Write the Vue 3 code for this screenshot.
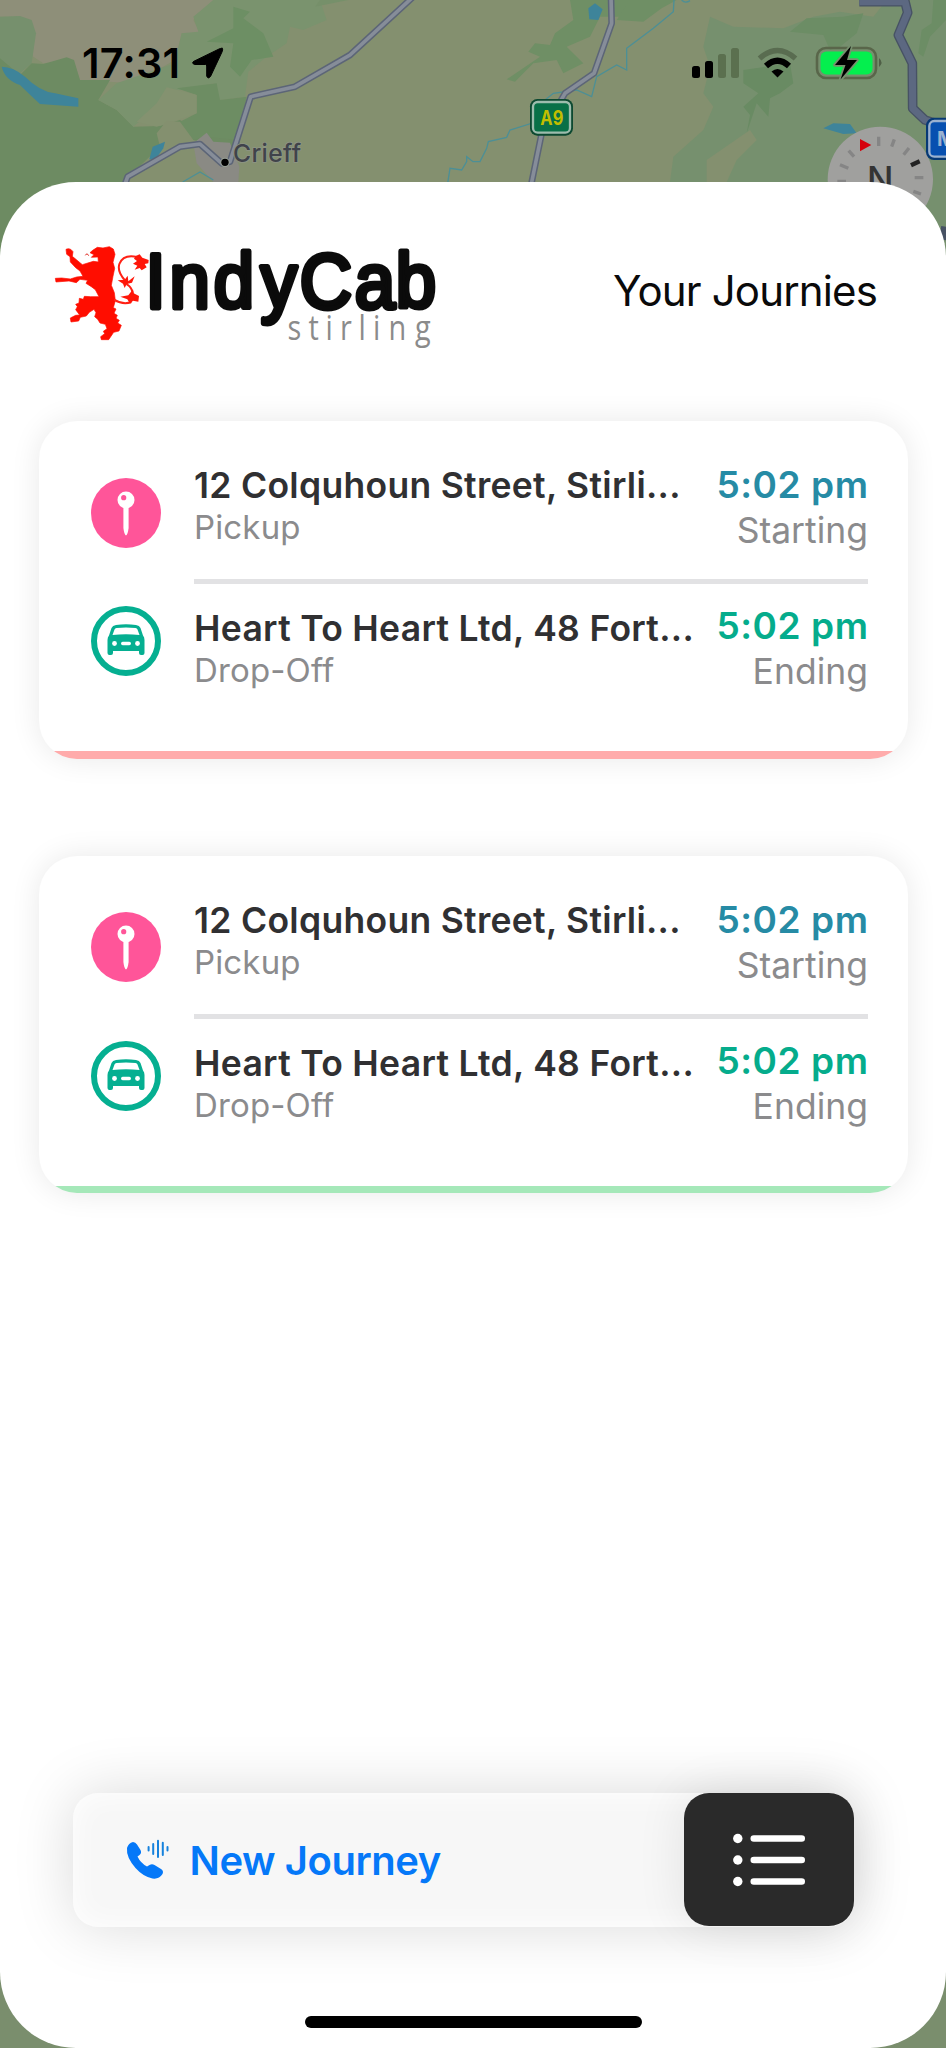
<script setup>
import { ref } from "vue";

const journeys = ref([
  {
    id: 1,
    status: "cancelled",
    stops: [
      { type: "start", address: "12 Colquhoun Street, Stirli...", label: "Pickup", time: "5:02 pm", note: "Starting" },
      { type: "end", address: "Heart To Heart Ltd, 48 Fort...", label: "Drop-Off", time: "5:02 pm", note: "Ending" },
    ],
  },
  {
    id: 2,
    status: "complete",
    stops: [
      { type: "start", address: "12 Colquhoun Street, Stirli...", label: "Pickup", time: "5:02 pm", note: "Starting" },
      { type: "end", address: "Heart To Heart Ltd, 48 Fort...", label: "Drop-Off", time: "5:02 pm", note: "Ending" },
    ],
  },
]);
</script>

<template>
  <div class="screen">
    <svg class="map" width="946" height="260" viewBox="0 0 2838 780">
      <rect width="2838" height="780" fill="#84906f" />
      <path d="M0 0H640L580 60L600 100L545 100L525 180L400 250L240 240L220 180L130 190L100 170L60 50L0 50Z" fill="#8e8f79" />
      <path d="M0 50L60 48L95 60L108 100L95 190L60 220L0 190Z" fill="#76906d" />
      <path d="M0 175L60 225L95 190L130 192L200 172L222 180L240 240L330 240L295 300L350 330L400 380L480 378L540 360L600 400L720 420L700 546L370 546L200 780H0Z" fill="#6d8b62" />
      <path d="M640 0H960L980 60L910 90L870 80L860 130L800 170L745 215L735 290L660 300L640 250L560 270L530 270L400 380L350 330L295 300L350 250L525 190L545 100L595 95L580 50Z" fill="#7a936e" />
      <path d="M700 20L750 35L730 55L790 100L820 170L755 180L720 230L690 200L700 130L620 125L700 85Z" fill="#6d8f64" />
      <path d="M530 265L650 250L660 300L740 290L715 420L620 410L575 420L540 365L590 340L590 285Z" fill="#6d8d63" />
      <path d="M410 365L470 310L500 262L590 285L590 340L540 358L470 380Z" fill="#849270" />
      <path d="M470 400L500 362L540 365L580 420L610 430L600 480L640 546H370L480 440Z" fill="#84906f" />
      <path d="M945 20L960 0H1045Z" fill="#76906a" />
      <path d="M580 430L620 398L640 425L690 428L718 500L715 546H640L590 490Z" fill="#8a8a84" />
      <path d="M5 200Q40 200 75 230Q120 275 165 280L235 295L235 320L120 312Q85 280 60 255Q15 240 5 200Z" fill="#3e849a" />
      <path d="M448 478L458 440L495 425L490 445L465 480Z" fill="#3e849a" />

      <path d="M1710 0H1900L1870 50L1800 50L1770 110L1700 140L1750 190L1690 220L1670 180L1600 190L1545 245L1520 238L1620 170L1585 155L1605 130L1650 135L1665 100L1720 60Z" fill="#6f8f65" />
      <path d="M1890 0H2030L1985 25L1930 65L1850 60Z" fill="#6f8f65" />
      <path d="M2130 50L2200 80L2350 85L2440 50L2520 35L2620 50L2660 0H2838V780H2500V546H2010L2020 470L2110 390L2140 320L2110 280L2130 200L2110 140Z" fill="#76906e" />
      <path d="M2370 95L2420 55L2530 50L2590 40L2570 100L2520 140L2490 150L2470 105Z" fill="#6c8d65" />
      <path d="M2230 210L2370 190L2380 250L2340 280L2310 295L2305 350L2270 310L2240 400L2250 345L2230 320L2275 280L2230 250Z" fill="#698b63" />
      <path d="M2120 480L2250 390L2270 420L2210 480L2180 546H2120Z" fill="#84906f" />
      <path d="M2800 0H2838V60L2790 110L2770 170L2755 160L2765 90L2795 70Z" fill="#6c8d65" />
      <path d="M1765 25L1785 10L1808 28L1795 60L1768 58Z" fill="#3e849a" />
      <path d="M2470 385L2500 370L2550 372L2570 400L2530 402Z" fill="#3e849a" />

      <g fill="none" stroke="#4c8f96" stroke-width="4">
        <path d="M2022 0L2020 35L1960 85L1880 145L1880 210L1850 195L1790 230L1775 290L1730 270L1660 280L1610 320L1595 370L1530 390L1520 412L1465 425L1460 445L1440 485L1419 485L1400 470L1400 485L1385 510L1350 505L1343 550" />
        <path d="M548 546L600 516L640 540" />
        <path d="M2045 0Q2055 12 2070 2" />
      </g>

      <g fill="none" stroke-linejoin="round">
        <g stroke="#5c6577" stroke-width="20">
          <path d="M1240 -10L1050 165L885 260L752 290L690 485L665 490L600 432L540 440L383 530L375 552" />
          <path d="M1833 -10L1835 70L1782 220L1695 280L1625 400L1594 552" />
        </g>
        <g stroke="#868d99" stroke-width="11">
          <path d="M1240 -10L1050 165L885 260L752 290L690 485L665 490L600 432L540 440L383 530L375 552" />
          <path d="M1833 -10L1835 70L1782 220L1695 280L1625 400L1594 552" />
        </g>
        <path d="M2578 5H2715L2723 38L2695 105L2737 190L2738 325L2775 360L2838 380M2838 680L2832 720" stroke="#475264" stroke-width="29" />
        <path d="M2578 5H2715L2723 38L2695 105L2737 190L2738 325L2775 360L2838 380" stroke="#5c6881" stroke-width="21" />
      </g>
      <circle cx="675" cy="487" r="14" fill="#98a095" />
      <circle cx="675" cy="487" r="11" fill="#000" />
      <text class="town" x="699" y="486" textLength="204">Crieff</text>

      <rect x="1590" y="297" width="129" height="110" rx="22" fill="#0d4931" />
      <rect x="1599" y="306" width="111" height="92" rx="14" fill="#087047" stroke="#9dbcad" stroke-width="7" />
      <text class="road" x="1621" y="374" textLength="69" lengthAdjust="spacingAndGlyphs" fill="#c1bd00">A9</text>

      <circle cx="2641" cy="538" r="158" fill="#a0a09e" />
      <g fill="none" stroke="#858585" stroke-width="10">
        <path d="M2636 410V438M2683 418L2675 440M2727 444L2711 464M2546 452L2562 470M2520 494L2545 505M2512 544H2538M2744 533H2770M2740 574L2763 582" />
      </g>
      <path d="M2733 496L2759 484" stroke="#222" stroke-width="13" />
      <path d="M2580 417L2614 435L2580 454Z" fill="#d5000b" />
      <text class="north" x="2601" y="575">N</text>
      <rect x="2778" y="353" width="140" height="127" rx="24" fill="#073975" />
      <rect x="2788" y="363" width="140" height="107" rx="15" fill="#0750b0" stroke="#9bb2d0" stroke-width="7" />
      <text class="road" x="2811" y="439" fill="#9bb2d0">M</text>
    </svg>

    <header class="status">
      <span class="clock">17:31</span>
      <svg class="arrow" width="33" height="33" viewBox="0 0 33 33">
        <path d="M31.5 1.5Q32 0.5 28 2L3 14.200Q0 16 3.500 17.500L14.500 17.500Q15.700 17.500 15.700 19V29Q17 32.500 19.500 29.500L31 5Q32 2.500 31.500 1.500Z" stroke="#000" stroke-linejoin="round" />
      </svg>
      <svg class="signals" width="194" height="36" viewBox="690 45 194 36">
        <rect x="692" y="66" width="8" height="12" rx="2.500" />
        <rect x="705" y="61" width="8" height="17" rx="2.500" />
        <rect x="718" y="54" width="8" height="24" rx="2.500" fill="#5b704f" />
        <rect x="731" y="48" width="8" height="30" rx="2.500" fill="#5b704f" />
        <path d="M759.500 58.500Q777.500 42.500 795.500 58.500" fill="none" stroke="#596c50" stroke-width="5.500" />
        <path d="M766 66Q777.500 55.500 789 66" fill="none" stroke="#000" stroke-width="6" />
        <path d="M777.500 77.500L771.500 71.500Q777.500 66.500 783.500 71.500Z" />
        <rect x="817" y="48" width="59" height="30" rx="9" fill="none" stroke="#59664a" stroke-width="2.600" />
        <path d="M879 58Q884 62.500 879 67Z" fill="#4f5f46" />
        <rect x="820.500" y="51.500" width="52" height="23" rx="6" fill="#04ef4e" />
        <path d="M851 46L835 65H845.500L840.500 79.500L857 60H847Z" stroke="#76906e" stroke-width="3.500" paint-order="stroke" stroke-linejoin="round" />
      </svg>
    </header>

    <main class="sheet">
      <div class="head">
        <svg class="logo" width="400" height="120" viewBox="0 0 400 120">
          <g transform="scale(0.33333)">
            <path d="M108 88Q120 82 129 95L127 109L157 134L190 124L205 126L204 111L184 112L192 104L180 98L188 91L202 82L219 84L238 80L250 87L255 103L249 127L254 145L249 169L244 196L253 218L256 242L250 263L258 267L252 280L262 286L258 295L268 301L263 309L274 316L267 333L251 337L236 359H214L212 350L224 341L220 334L231 326L226 313L210 309L203 298L194 290L198 278L192 268L178 277L169 288L151 292L146 303L123 306L121 294L137 286L149 285L137 269L142 260L137 253L147 249L148 235L160 238L163 229L182 230L207 230L196 209L184 200L168 190L173 181L150 178L139 188L117 183L78 186L76 175L95 174L121 177L140 171L159 169L150 153L137 143L121 126L120 110L110 103Z" fill="#ff0d00" stroke="#ff0d00" stroke-width="2" stroke-linejoin="round" />
            <path d="M166 106Q171 97 176 107" fill="none" stroke="#de2018" stroke-width="3" />
            <path d="M252 239Q280 256 304 246M309 225Q307 203 292 194L285 181Q261 155 268 132Q280 102 321 111" fill="none" stroke="#ff2115" stroke-width="6" />
            <path d="M312 116L317 108L329 103L337 113L356 120L355 130L344 132L350 142L335 151L329 144L314 149L322 137L309 131L321 123Z" fill="#ff1609" />
            <path d="M263 181L284 179L293 167L295 184L314 169L306 188L290 192L284 204L279 191ZM271 230L295 226L309 208L311 220L327 228L325 245L309 242L300 251L292 238Z" fill="#ff1609" />
          </g>
          <text class="brand" transform="scale(0.93 1)" x="124.300 150.100 197.600 248 290 349.200 393.400" y="88.200">IndyCab</text>
          <text class="city" transform="scale(0.85 1)" x="303 327.600 347.600 364.700 386.500 403.500 421.800 453" y="120">stirling</text>
        </svg>
        <h1>Your Journies</h1>
      </div>

      <section v-for="journey in journeys" :key="journey.id" class="card" :class="journey.status">
        <div class="icons">
          <svg width="70" height="70" viewBox="0 0 70 70">
            <circle cx="35" cy="35" r="35" fill="#ff5599" />
            <path d="M32.400 27H37.600V50Q36.700 57 35 57.500Q33.300 57 32.400 50Z" fill="#fff" />
            <circle cx="35" cy="22" r="8.500" fill="#fff" />
            <circle cx="32.700" cy="19.700" r="2.600" fill="#ff5599" />
          </svg>
          <svg width="70" height="70" viewBox="0 0 70 70">
            <circle cx="35" cy="35" r="32" fill="none" stroke="#05af91" stroke-width="6" />
            <path fill-rule="evenodd" fill="#05af91" d="M25 19Q35 17.500 45 19Q48.500 19.500 49.500 22L52 29.500Q53.500 31 53.500 34V47Q53.500 49 51.500 49H50Q48 49 48 47V45H22V47Q22 49 20 49H18.500Q16.500 49 16.500 47V34Q16.500 31 18 29.500L20.500 22Q21.500 19.500 25 19ZM25.500 22Q35 21 44.500 22Q46 22.200 46.500 23.500L48.500 29Q35 27.500 21.500 29L23.500 23.500Q24 22.200 25.500 22Z" />
            <circle cx="23.500" cy="37.500" r="2.400" fill="#fff" />
            <circle cx="46.500" cy="37.500" r="2.400" fill="#fff" />
            <rect x="30" y="35.800" width="10" height="3.400" rx="1.700" fill="#fff" />
          </svg>
        </div>
        <div class="stops">
          <div v-for="stop in journey.stops" :key="stop.type" class="stop" :class="stop.type">
            <div class="place">
              <div class="address">{{ stop.address }}</div>
              <div class="label">{{ stop.label }}</div>
            </div>
            <div class="when">
              <div class="time">{{ stop.time }}</div>
              <div class="note">{{ stop.note }}</div>
            </div>
          </div>
        </div>
      </section>

      <nav class="bar">
        <button class="new">
          <svg width="45" height="42" viewBox="0 0 45 42">
            <path d="M2 9Q3.500 4 8 3Q10.500 3 12 5.500L15.500 11Q17 14 14.500 16L12.500 17.500Q15.500 24 22 27.500L24.500 26Q27 24.500 29.500 26L36 30Q39 32 37.500 35Q34 40.500 27.500 39.500Q18 37.500 10.500 29Q1 18 2 9Z" fill="#0578f8" />
            <path d="M23.600 8V11.500M28.200 5V15M33 1.800V18M37.800 3.800V16M42.500 8V11.500" stroke="#1682dd" stroke-width="2" stroke-linecap="round" />
          </svg>
          <span>New Journey</span>
        </button>
        <button class="list">
          <svg width="72" height="54" viewBox="0 0 72 54">
            <g fill="#fff">
              <circle cx="4.800" cy="5.500" r="4.700" />
              <circle cx="4.800" cy="27" r="4.700" />
              <circle cx="4.800" cy="48.500" r="4.700" />
              <rect x="17.500" y="2.200" width="54.500" height="6.600" rx="3.300" />
              <rect x="17.500" y="23.700" width="54.500" height="6.600" rx="3.300" />
              <rect x="17.500" y="45.200" width="54.500" height="6.600" rx="3.300" />
            </g>
          </svg>
        </button>
      </nav>
      <div class="home"></div>
    </main>
  </div>
</template>

<style>
body {
  margin: 0;
}
</style>

<style scoped>
.screen {
  position: relative;
  display: flex;
  flex-direction: column;
  width: 946px;
  height: 2048px;
  overflow: hidden;
  background: #7a8e6d;
  font-family: Inter, "Liberation Sans", sans-serif;
}
.map {
  position: absolute;
  top: 0;
  left: 0;
}
.town {
  font-size: 74px;
  font-weight: 500;
  fill: #40434a;
  stroke: #8d9485;
  stroke-width: 5px;
  paint-order: stroke;
}
.road {
  font-size: 60px;
  font-weight: 700;
}
.north {
  font-size: 105px;
  font-weight: 500;
  fill: #343434;
}
.status {
  position: relative;
  display: flex;
  align-items: flex-start;
  box-sizing: border-box;
  height: 182px;
  flex: none;
  padding: 38px 62px 0 82px;
}
.clock {
  width: 109px;
  font-size: 41.500px;
  font-weight: 600;
  line-height: 50px;
  letter-spacing: 0.2px;
}
.arrow {
  margin-top: 9px;
}
.signals {
  margin: 7px 0 0 auto;
}
.sheet {
  position: relative;
  display: flex;
  flex-direction: column;
  flex: 1;
  background: #fff;
  border-radius: 76px;
}
.head {
  display: flex;
  justify-content: space-between;
  align-items: flex-start;
  height: 239px;
  padding: 0 69px 0 30px;
}
.logo {
  margin-top: 38px;
  overflow: visible;
}
.brand {
  font-family: "Liberation Sans", sans-serif;
  font-size: 78px;
  fill: #0b0b0b;
  stroke: #0b0b0b;
  stroke-width: 5px;
  stroke-linejoin: round;
}
.city {
  font-family: "Open Sans", sans-serif;
  font-size: 34px;
  fill: #8b8b8b;
}
h1 {
  margin: 84px 0 0;
  font-size: 42px;
  font-weight: 400;
  line-height: 50px;
  letter-spacing: -0.85px;
  color: #0a0a0a;
}
.card {
  display: flex;
  box-sizing: border-box;
  height: 338px;
  margin: 0 38.500px 96.500px 39px;
  padding: 43px 39.500px 0 51.500px;
  border-radius: 38px;
  background: linear-gradient(#ffabab, #ffabab) bottom / 100% 8px no-repeat #fff;
  box-shadow: 0 0 30px rgba(0, 0, 0, 0.09);
}
.card.complete {
  height: 337px;
  margin-bottom: 0;
  background: linear-gradient(#a5e8b9, #a5e8b9) bottom / 100% 7px no-repeat #fff;
}
.icons {
  display: flex;
  flex-direction: column;
  gap: 58.500px;
  padding-top: 13.500px;
  margin-right: 33.500px;
}
.stops {
  flex: 1;
}
.stop {
  display: flex;
  justify-content: space-between;
  white-space: nowrap;
}
.stop.start {
  height: 115px;
  border-bottom: 5px solid #e2e2e4;
}
.stop.end {
  padding-top: 23px;
}
.address {
  padding-top: 1px;
  font-size: 35.500px;
  font-weight: 600;
  line-height: 42px;
  letter-spacing: 0.3px;
  color: #303032;
}
.label {
  font-size: 33px;
  line-height: 41px;
  letter-spacing: 0.15px;
  color: #8b8b8d;
}
.when {
  text-align: right;
}
.end .when {
  margin-top: -2px;
}
.time {
  font-size: 37px;
  font-weight: 600;
  line-height: 42px;
  letter-spacing: 0.55px;
  margin-right: -0.5px;
  color: #268ba5;
}
.end .time {
  color: #05ac8c;
}
.note {
  padding-top: 1px;
  font-size: 35.500px;
  line-height: 48px;
  color: #8b8b8d;
}
.bar {
  display: flex;
  height: 134px;
  margin: auto 92px 0 73px;
  border-radius: 25px;
  background: #f7f7f7;
  box-shadow: 0 0 60px rgba(0, 0, 0, 0.15), inset 0 0 30px #fff;
}
button {
  display: flex;
  align-items: center;
  border: 0;
  font-family: inherit;
}
.new {
  flex: 1;
  padding: 0 0 0 51.500px;
  background: none;
  gap: 20px;
  font-size: 40px;
  font-weight: 600;
  letter-spacing: -0.45px;
  color: #0578f8;
}
.list {
  justify-content: center;
  width: 170px;
  height: 133px;
  border-radius: 25px;
  background: #2a2a2a;
  box-shadow: 0 0 50px rgba(0, 0, 0, 0.09);
}
.home {
  width: 337px;
  height: 12px;
  margin: 89px auto 20px;
  border-radius: 6px;
  background: #000;
}
</style>
